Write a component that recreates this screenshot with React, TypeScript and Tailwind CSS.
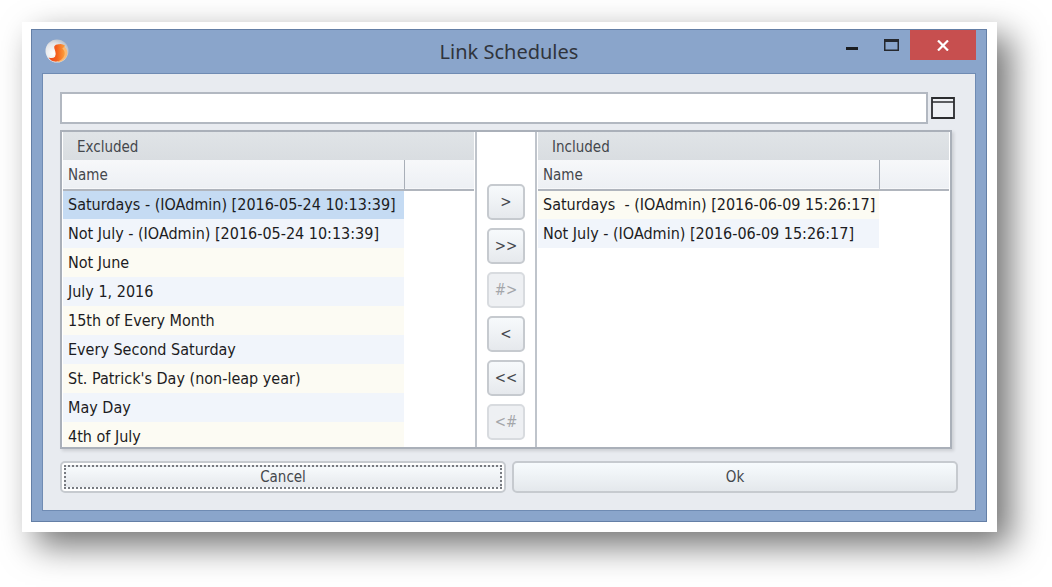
import React from "react";

const excluded = [
  "Saturdays - (IOAdmin) [2016-05-24 10:13:39]",
  "Not July - (IOAdmin) [2016-05-24 10:13:39]",
  "Not June",
  "July 1, 2016",
  "15th of Every Month",
  "Every Second Saturday",
  "St. Patrick's Day (non-leap year)",
  "May Day",
  "4th of July",
];

const included = [
  "Saturdays  - (IOAdmin) [2016-06-09 15:26:17]",
  "Not July - (IOAdmin) [2016-06-09 15:26:17]",
];

const moves = [
  { text: ">", label: "Include selected", disabled: false },
  { text: ">>", label: "Include all", disabled: false },
  { text: "#>", label: "Include by number", disabled: true },
  { text: "<", label: "Exclude selected", disabled: false },
  { text: "<<", label: "Exclude all", disabled: false },
  { text: "<#", label: "Exclude by number", disabled: true },
];

function Logo() {
  return (
    <svg viewBox="0 0 24 24" className="size-6" aria-hidden="true">
      <defs>
        <radialGradient id="ball" cx="0.35" cy="0.6" r="0.7">
          <stop offset="0" stopColor="#ffffff" />
          <stop offset="0.6" stopColor="#e4e5e8" />
          <stop offset="1" stopColor="#b4bac4" />
        </radialGradient>
        <linearGradient id="flame" x1="0" y1="0" x2="1" y2="0">
          <stop offset="0" stopColor="#ee4a22" />
          <stop offset="0.5" stopColor="#f4601d" />
          <stop offset="1" stopColor="#fca03c" />
        </linearGradient>
      </defs>
      <circle cx="12" cy="12" r="11.5" fill="url(#ball)" />
      <path d="M17 9.5 L19.5 7.5 Q23.6 12 22 16.5 Q19.5 22.5 13 23.2 L12 20 Q18 15 14.5 11Z" fill="#fbb870" />
      <path
        d="M9.3 7.2 Q10.4 5 14 5.2 Q17.6 4.6 20 6.6 Q19.5 8.6 17.4 9.2 Q21.6 14 18.4 18.5 Q15 23 10 22.6 Q6 22.2 3.6 18.4 Q7.5 20 10 17.8 Q11.4 15.8 10.2 12 Q8.7 9.2 9.3 7.2Z"
        fill="url(#flame)"
      />
    </svg>
  );
}

function ListPanel({ title, rows, selected }: { title: string; rows: string[]; selected?: number }) {
  return (
    <section className="flex min-w-0 flex-1 flex-col overflow-hidden bg-white px-px">
      <h2 className="h-7 shrink-0 bg-linear-to-b from-[#e0e4e7] to-[#d9dde1] pl-3.5 leading-[30px] text-[#44474c]">
        {title}
      </h2>
      <table className="w-full table-fixed border-collapse">
        <colgroup>
          <col className="w-[83%]" />
          <col />
        </colgroup>
        <thead>
          <tr className="h-[30px] border-b-2 border-[#b0b5bd] bg-linear-to-b from-[#f7f8fa] to-[#edf0f4] text-[#44474c]">
            <th scope="col" className="border-r border-[#a9afb8] pl-[5px] text-left font-normal">
              Name
            </th>
            <td />
          </tr>
        </thead>
        <tbody className="text-base">
          {rows.map((row, i) => (
            <tr key={row} className="h-[29px]">
              <td
                className={
                  "whitespace-pre pl-[5px] text-[#1c1c22] " +
                  (i === selected ? "bg-[#c5dbf3]" : i % 2 ? "bg-[#f1f5fb]" : "bg-[#fcfbf3]")
                }
              >
                {row}
              </td>
              <td />
            </tr>
          ))}
        </tbody>
      </table>
    </section>
  );
}

export default function App() {
  return (
    <main className="bg-white pt-[22px] pr-[55px] pb-[55px] pl-[22px] font-['DejaVu_Sans_Condensed','DejaVu_Sans',sans-serif] text-[15px] leading-5">
      <div className="bg-white pt-[7px] pr-2.5 pb-2.5 pl-[9px] shadow-[14px_14px_32px_rgba(0,0,0,0.55)]">
        <div className="border border-[#647fa6] bg-[#8aa5cb] px-2.5 pb-2.5">
          <header className="grid h-[43px] grid-cols-[1fr_auto_1fr]">
            <div className="pt-[9px] pl-[3px]">
              <Logo />
            </div>
            <h1 className="pt-2.5 font-['Noto_Sans',sans-serif] text-xl leading-6 text-[#30343c]">Link Schedules</h1>
            <div className="flex items-start justify-end">
              <button aria-label="Minimize" className="flex h-[30px] w-10 items-center justify-center">
                <svg viewBox="0 0 12 10" className="h-2.5 w-3">
                  <path d="M0 7h12v3H0z" fill="#1b1d21" />
                </svg>
              </button>
              <button aria-label="Maximize" className="flex h-[30px] w-[38px] items-center justify-center">
                <svg viewBox="0 0 15 12" className="h-3 w-[15px]">
                  <path d="M.75 1h13.5v10.25H.75z" fill="none" stroke="#25282e" strokeWidth="1.5" />
                  <path d="M0 0h15v3H0z" fill="#25282e" />
                </svg>
              </button>
              <button aria-label="Close" className="flex h-[30px] w-[66px] items-center justify-center bg-[#c74f4f]">
                <svg viewBox="0 0 12 11" className="h-[11px] w-3">
                  <path d="M1 .5l10 10M11 .5l-10 10" stroke="#fff" strokeWidth="2.2" />
                </svg>
              </button>
            </div>
          </header>
          <div className="border border-[#6f8bb3] bg-[#e8ebf0] pt-[18px] pr-[17px] pb-[17px] pl-[17px]">
            <div className="flex items-center gap-[3px] pr-[3px]">
              <input
                aria-label="Filter"
                className="h-8 min-w-0 flex-1 border-2 border-[#b2b8c1] bg-white px-2 outline-none"
              />
              <button aria-label="Open window">
                <svg viewBox="0 0 24 22" className="h-[22px] w-6">
                  <path d="M1 1h22v20H1z" fill="#eef0f4" stroke="#2b2c2f" strokeWidth="1.8" />
                  <path d="M1 5h22" stroke="#2b2c2f" strokeWidth="1.5" />
                </svg>
              </button>
            </div>
            <div className="mt-1.5 mr-1.5 flex h-[319px] border-2 border-[#aab0b9] bg-white shadow-[2px_2px_3px_rgba(0,0,0,0.12)]">
              <ListPanel title="Excluded" rows={excluded} selected={0} />
              <div className="flex w-[62px] flex-col items-center gap-2 border-x-2 border-[#bfc4cb] pt-[52px]">
                {moves.map((m) => (
                  <button
                    key={m.text}
                    aria-label={m.label}
                    disabled={m.disabled}
                    className="h-9 w-[38px] shrink-0 rounded-[5px] border-2 border-[#c6cacf] bg-linear-to-b from-[#f7fafc] to-[#e6e9ed] text-[#45484e] disabled:border-[#d8dbdf] disabled:from-[#eef0f3] disabled:to-[#eef0f3] disabled:text-[#a4a6aa]"
                  >
                    {m.text}
                  </button>
                ))}
              </div>
              <ListPanel title="Included" rows={included} />
            </div>
            <div className="mt-3 grid grid-cols-2 gap-1.5">
              <button className="h-8 rounded-[5px] border-2 border-[#c6cacf] bg-white p-0.5 text-[#44474c]">
                <span className="flex h-full items-center justify-center border-2 border-dotted border-[#777a80] bg-linear-to-b from-[#f7fafc] to-[#e6e9ed]">
                  Cancel
                </span>
              </button>
              <button className="h-8 rounded-[5px] border-2 border-[#c6cacf] bg-linear-to-b from-[#f7fbfd] to-[#e4e8ec] text-[#44474c]">
                Ok
              </button>
            </div>
          </div>
        </div>
      </div>
    </main>
  );
}
